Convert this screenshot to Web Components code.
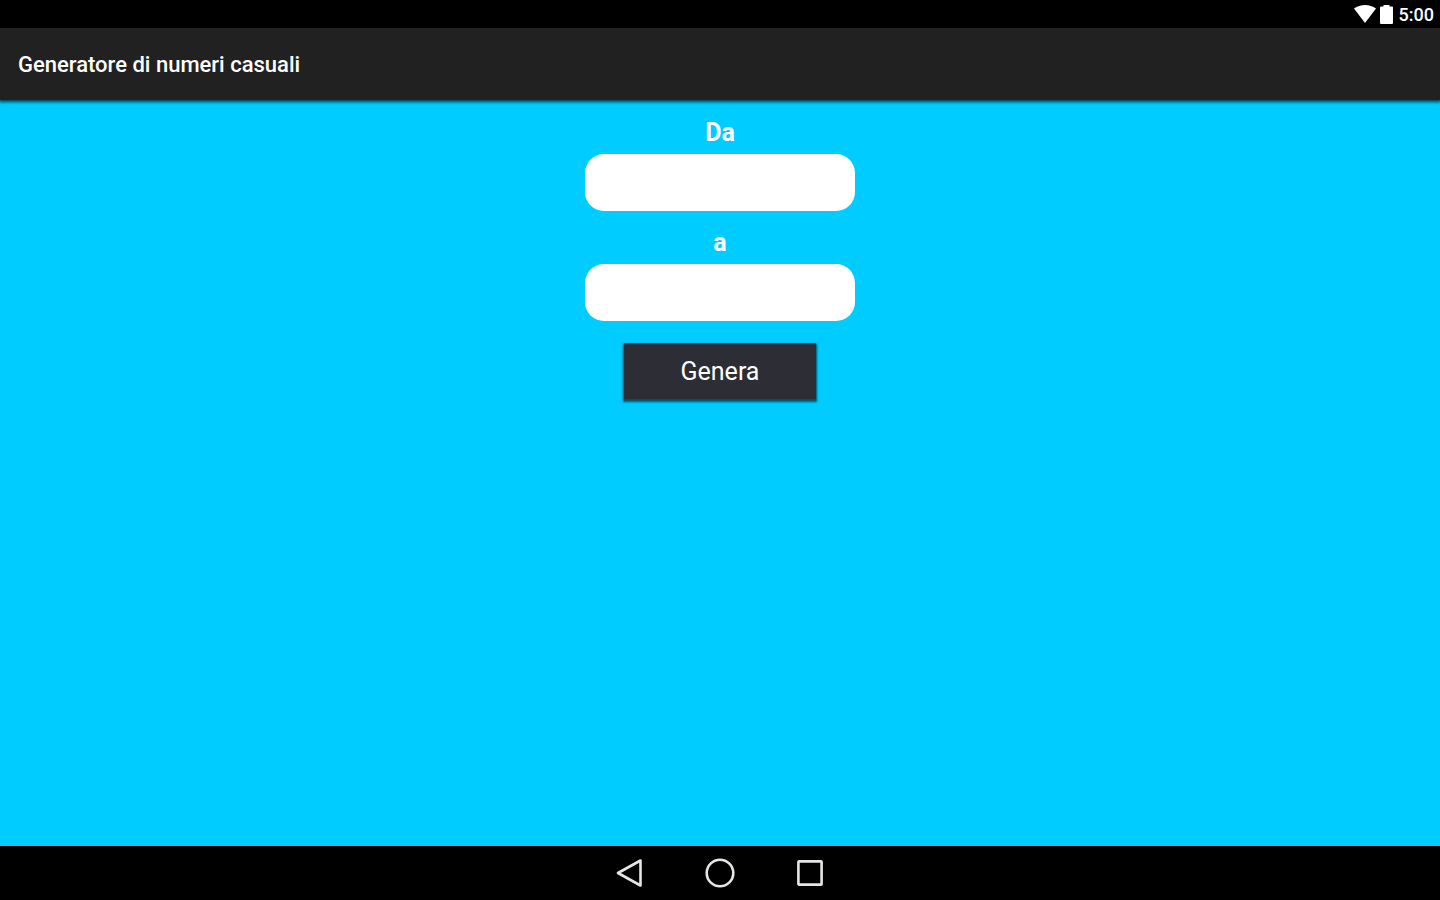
<!DOCTYPE html>
<html lang="it">
<head>
<meta charset="utf-8">
<meta name="viewport" content="width=device-width, initial-scale=1">
<title>Generatore di numeri casuali</title>
<style>
html, body { margin: 0; height: 100%; }
body { font-family: Roboto, "Noto Sans", sans-serif; color: #fff; background: #000; }
</style>
</head>
<body>
<app-screen>
  <status-bar slot="status">5:00</status-bar>
  <app-bar slot="header">Generatore di numeri casuali</app-bar>
  <range-form></range-form>
  <nav-bar slot="navigation"></nav-bar>
</app-screen>
<script>
function define(name, html, setup) {
  const template = document.createElement('template');
  template.innerHTML = html;
  customElements.define(name, class extends HTMLElement {
    constructor() {
      super();
      this.attachShadow({ mode: 'open' }).append(template.content.cloneNode(true));
    }
    connectedCallback() {
      if (setup) setup(this, this.shadowRoot);
    }
  });
}

define('app-screen', `
  <style>
    :host { display: flex; flex-direction: column; min-height: 100vh; }
    main { flex: 1; background: #00ccff; }
  </style>
  <slot name="status"></slot>
  <slot name="header"></slot>
  <main><slot></slot></main>
  <slot name="navigation"></slot>`);

define('status-bar', `
  <style>
    :host { display: flex; align-items: center; justify-content: flex-end; gap: 4px;
      box-sizing: border-box; height: 28px; padding: 2px 6px 0 0; background: #000;
      font-size: 18px; line-height: 26px; font-weight: 500; }
    svg { display: block; fill: #fff; }
    span { padding-left: 2px; }
  </style>
  <svg width="22" height="20" viewBox="0 0 22 20" aria-label="Wi-Fi" role="img"><path d="M0 3.6C6.2-1.1 15.8-1.1 22 3.6L11 18z"/></svg>
  <svg width="13" height="20" viewBox="0 0 13 20" aria-label="Batteria" role="img"><path d="M3.5 0h6v1.6H12q1 0 1 1V18q0 1-1 1H1q-1 0-1-1V2.600q0-1 1-1h2.500z"/></svg>
  <span><slot></slot></span>`);

define('app-bar', `
  <style>
    :host { display: flex; align-items: center; position: relative; box-sizing: border-box;
      height: 72px; padding: 2px 18px 0; background: #212121;
      box-shadow: 0 1px 3px 1px rgba(0, 0, 0, .7); }
    h1 { margin: 0; font-size: 22px; line-height: 32px; font-weight: 500; }
  </style>
  <h1><slot></slot></h1>`);

define('number-field', `
  <style>
    :host { display: flex; flex-direction: column; gap: 2px; }
    label { font-size: 25px; line-height: 38px; font-weight: 700; text-align: center; }
    input { box-sizing: border-box; width: 100%; height: 57px; padding: 0 18px; border: 0;
      border-radius: 19px; background: #fff; color: #212121; font: inherit; font-size: 25px;
      text-align: center; outline: none; }
  </style>
  <label for="value"><slot></slot></label>
  <input id="value" type="text" inputmode="numeric">`);

define('action-button', `
  <style>
    :host { display: flex; }
    button { width: 192px; height: 56px; padding: 0; border: 0; background: #2d2d35;
      color: #fff; font: inherit; font-size: 25px; cursor: pointer;
      box-shadow: 0 2px 2px 1px rgba(0, 0, 0, .6); }
  </style>
  <button type="button"><slot></slot></button>`);

define('range-form', `
  <style>
    :host { display: flex; flex-direction: column; align-items: center; gap: 13px;
      padding: 14px 16px; }
    number-field { width: 270px; max-width: 100%; }
    action-button { padding-top: 9px; }
    output:empty { display: none; }
    output { font-size: 25px; line-height: 38px; font-weight: 700; }
  </style>
  <number-field id="from">Da</number-field>
  <number-field id="to">a</number-field>
  <action-button>Genera</action-button>
  <output></output>`, (host, root) => {
  const read = id => parseInt(root.getElementById(id).shadowRoot.querySelector('input').value, 10);
  root.querySelector('action-button').onclick = () => {
    const a = read('from'), b = read('to');
    if (Number.isNaN(a) || Number.isNaN(b)) return;
    const low = Math.min(a, b), high = Math.max(a, b);
    root.querySelector('output').textContent = low + Math.floor(Math.random() * (high - low + 1));
  };
});

define('nav-bar', `
  <style>
    :host { display: block; background: #000; }
    nav { display: flex; align-items: center; justify-content: center; height: 54px; }
    button { display: flex; align-items: center; justify-content: center; width: 90px;
      height: 54px; padding: 0; border: 0; background: none; cursor: pointer; }
    svg { fill: none; stroke: #e8e4e6; stroke-width: 2.6; stroke-linejoin: round; }
  </style>
  <nav aria-label="Sistema">
    <button type="button" aria-label="Indietro"><svg width="32" height="32" viewBox="0 0 32 32"><path d="M4 16L26.500 3.500v25z"/></svg></button>
    <button type="button" aria-label="Home"><svg width="32" height="32" viewBox="0 0 32 32"><circle cx="16" cy="16" r="13.3"/></svg></button>
    <button type="button" aria-label="Recenti"><svg width="32" height="32" viewBox="0 0 32 32"><rect x="4.4" y="4.4" width="23.2" height="23.2" rx=".6"/></svg></button>
  </nav>`);
</script>
</body>
</html>
